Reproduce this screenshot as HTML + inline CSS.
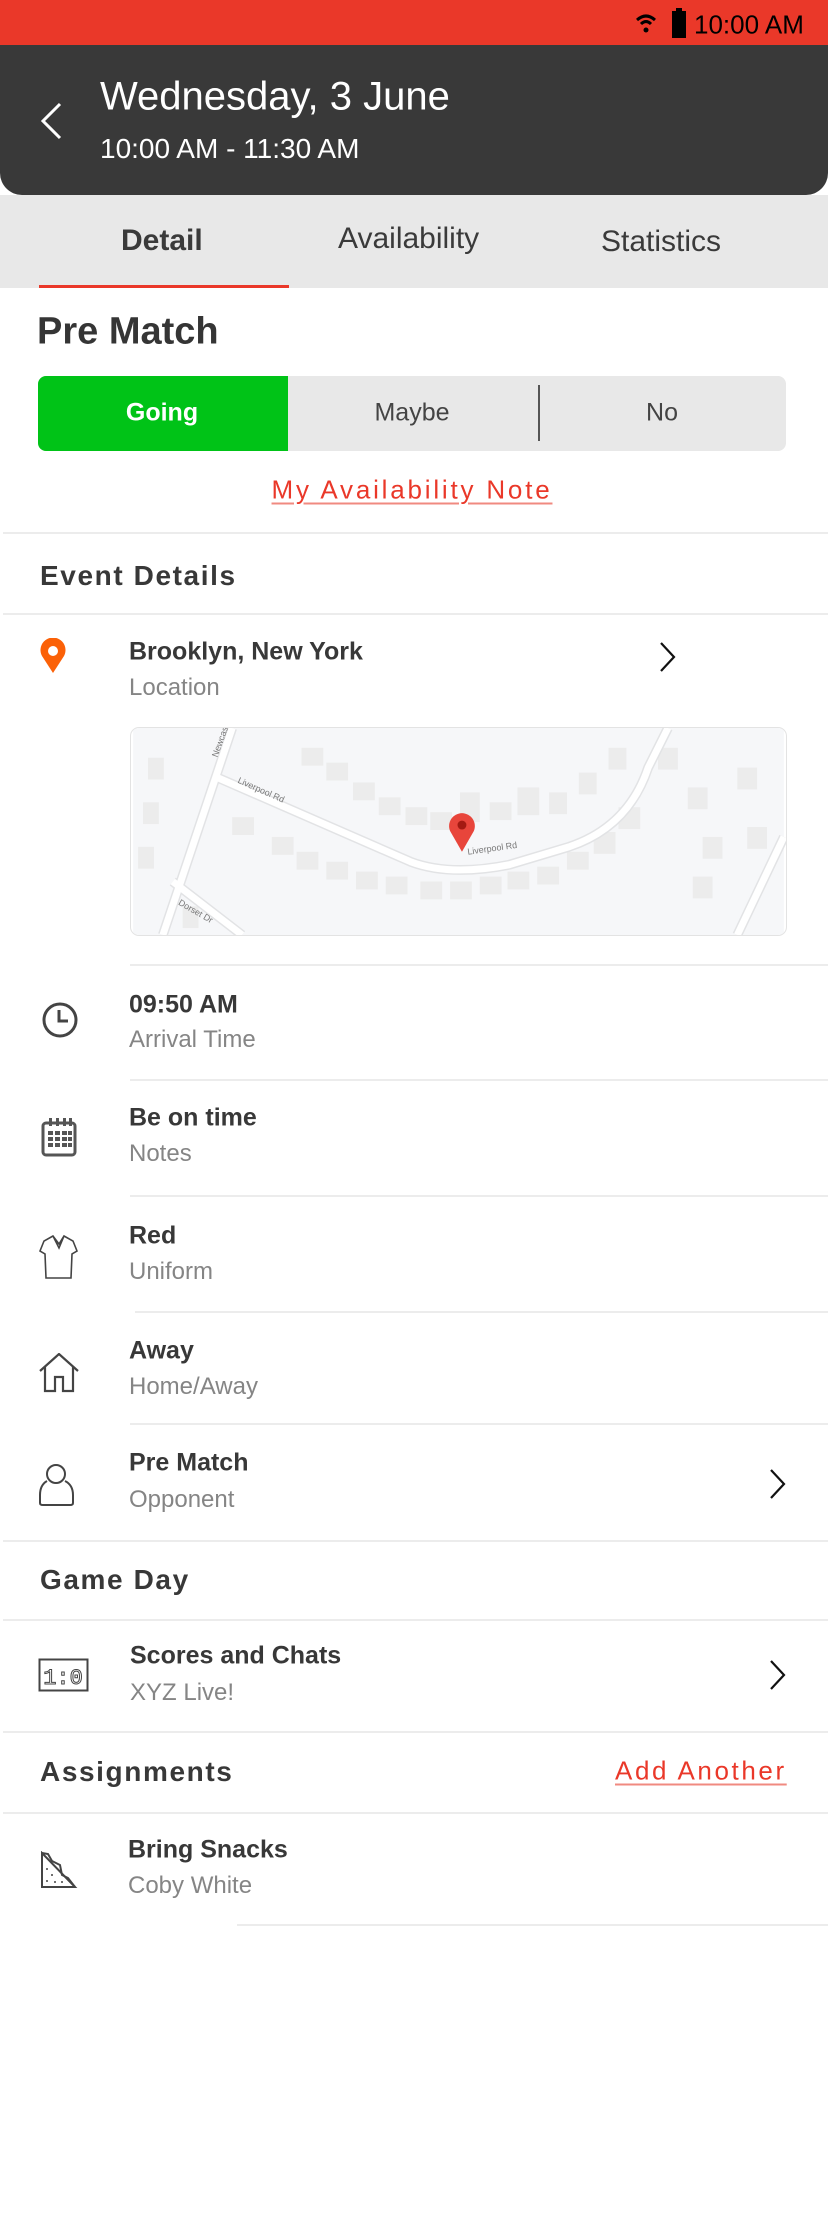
<!DOCTYPE html>
<html><head><meta charset="utf-8"><style>
*{margin:0;padding:0;box-sizing:border-box}
body{width:828px;height:2236px;background:#fff;font-family:"Liberation Sans",sans-serif;color:#333;position:relative;overflow:hidden}
.a{position:absolute}
.status{left:0;top:0;width:828px;height:45px;background:#ea3829}
.hdr{left:0;top:45px;width:828px;height:150px;background:#393939;border-radius:0 0 22px 22px}
.tabs{left:0;top:195px;width:828px;height:93px;background:#e8e8e8}
.t{transform:translateY(-50%);white-space:nowrap}
.div{height:2px;background:#ececec}
.b{font-weight:bold;font-size:25px;color:#383838}
.s{font-size:24px;color:#858585}
.sec{font-weight:bold;font-size:28px;letter-spacing:1.6px;color:#383838}
</style></head><body>
<div class="a status"></div>
<svg class="a" style="left:636px;top:12px" width="20" height="22" viewBox="0 0 20 22"><path d="M1 8 Q10 0 19 8" stroke="#000" stroke-width="3" fill="none"/><path d="M5 12 Q10 7 15 12" stroke="#000" stroke-width="3" fill="none"/><circle cx="10" cy="18" r="2.5" fill="#000"/></svg>
<div class="a" style="left:672px;top:11px;width:14px;height:27px;background:#000"></div>
<div class="a" style="left:676px;top:8px;width:6px;height:4px;background:#000"></div>
<div class="a t" style="left:694px;top:25px;font-size:26px;color:#000">10:00 AM</div>
<div class="a hdr"></div>
<svg class="a" style="left:38px;top:102px" width="26" height="38" viewBox="0 0 26 38"><path d="M22 2 L5 19 L22 36" stroke="#fff" stroke-width="3" fill="none"/></svg>
<div class="a t" style="left:100px;top:97px;font-size:40px;color:#fff">Wednesday, 3 June</div>
<div class="a t" style="left:100px;top:149px;font-size:28px;color:#fff">10:00 AM - 11:30 AM</div>
<div class="a tabs"></div>
<div class="a t" style="left:121px;top:241px;font-size:30px;font-weight:bold;color:#3a3a3a">Detail</div>
<div class="a t" style="left:338px;top:239px;font-size:30px;color:#3a3a3a">Availability</div>
<div class="a t" style="left:601px;top:242px;font-size:30px;color:#3a3a3a">Statistics</div>
<div class="a" style="left:39px;top:285px;width:250px;height:3px;background:#ea3829"></div>
<div class="a t" style="left:37px;top:332px;font-size:38px;font-weight:bold;color:#353535">Pre Match</div>
<div class="a" style="left:38px;top:376px;width:748px;height:75px;background:#e8e8e8;border-radius:8px;overflow:hidden"><div style="width:250px;height:75px;background:#00c317"></div></div>
<div class="a" style="left:538px;top:385px;width:2px;height:56px;background:#555"></div>
<div class="a t" style="left:162px;top:413px;font-size:25px;font-weight:bold;color:#fff;transform:translate(-50%,-50%)">Going</div>
<div class="a t" style="left:412px;top:413px;font-size:25px;color:#444;transform:translate(-50%,-50%)">Maybe</div>
<div class="a t" style="left:662px;top:413px;font-size:25px;color:#444;transform:translate(-50%,-50%)">No</div>
<div class="a t" style="left:412px;top:490px;font-size:26px;color:#ea3829;letter-spacing:2.8px;transform:translate(-50%,-50%);text-decoration:underline;text-decoration-color:#f08a80;text-underline-offset:4px">My Availability Note</div>
<div class="a div" style="left:3px;top:532px;width:825px"></div>
<div class="a t sec" style="left:40px;top:576px">Event Details</div>
<div class="a div" style="left:3px;top:613px;width:825px"></div>
<svg class="a" style="left:39px;top:638px" width="28" height="36" viewBox="0 0 28 36"><path d="M14 35 L3 18 A12.5 12.5 0 1 1 25 18 Z" fill="#fb6107"/><circle cx="14" cy="13" r="5" fill="#fff"/></svg>
<div class="a t b" style="left:129px;top:652px">Brooklyn, New York</div>
<div class="a t s" style="left:129px;top:688px">Location</div>
<svg class="a" style="left:658px;top:641px" width="20" height="32" viewBox="0 0 20 32"><path d="M3 2 L16 16 L3 30" stroke="#111" stroke-width="2.2" fill="none"/></svg>
<svg class="a" style="left:130px;top:727px;border:1px solid #e3e3e3;border-radius:9px" width="657" height="209" viewBox="0 0 657 209">
<rect width="657" height="209" fill="#f6f7f9"/>
<g fill="#ececec">
<rect x="170" y="20" width="22" height="18"/><rect x="195" y="35" width="22" height="18"/><rect x="222" y="55" width="22" height="18"/><rect x="248" y="70" width="22" height="18"/><rect x="275" y="80" width="22" height="18"/><rect x="300" y="85" width="22" height="18"/><rect x="330" y="65" width="20" height="30"/><rect x="360" y="75" width="22" height="18"/><rect x="388" y="60" width="22" height="28"/><rect x="420" y="65" width="18" height="22"/><rect x="450" y="45" width="18" height="22"/><rect x="480" y="20" width="18" height="22"/>
<rect x="100" y="90" width="22" height="18"/><rect x="140" y="110" width="22" height="18"/><rect x="165" y="125" width="22" height="18"/><rect x="195" y="135" width="22" height="18"/><rect x="225" y="145" width="22" height="18"/><rect x="255" y="150" width="22" height="18"/><rect x="290" y="155" width="22" height="18"/><rect x="320" y="155" width="22" height="18"/><rect x="350" y="150" width="22" height="18"/><rect x="378" y="145" width="22" height="18"/><rect x="408" y="140" width="22" height="18"/><rect x="438" y="125" width="22" height="18"/><rect x="465" y="105" width="22" height="22"/><rect x="490" y="80" width="22" height="22"/>
<rect x="530" y="20" width="20" height="22"/><rect x="560" y="60" width="20" height="22"/><rect x="575" y="110" width="20" height="22"/><rect x="565" y="150" width="20" height="22"/><rect x="610" y="40" width="20" height="22"/><rect x="620" y="100" width="20" height="22"/>
<rect x="15" y="30" width="16" height="22"/><rect x="10" y="75" width="16" height="22"/><rect x="5" y="120" width="16" height="22"/><rect x="50" y="180" width="16" height="22"/>
</g>
<g stroke="#e2e3e5" stroke-width="10" fill="none">
<path d="M100 0 L30 209"/><path d="M85 50 L280 135 Q320 150 380 138 L440 120 Q500 100 520 40 L540 0"/><path d="M40 155 L110 209"/><path d="M657 110 L610 209"/></g>
<g stroke="#fff" stroke-width="7" fill="none">
<path d="M100 0 L30 209"/><path d="M85 50 L280 135 Q320 150 380 138 L440 120 Q500 100 520 40 L540 0"/><path d="M40 155 L110 209"/><path d="M657 110 L610 209"/></g>
<g font-size="9" fill="#777" font-family="Liberation Sans"><text x="105" y="55" transform="rotate(24 105 55)">Liverpool Rd</text><text x="338" y="128" transform="rotate(-8 338 128)">Liverpool Rd</text><text x="45" y="178" transform="rotate(30 45 178)">Dorset Dr</text><text x="85" y="30" transform="rotate(-70 85 30)">Newcas</text></g>
<path d="M332 125 L320 104 A13 13 0 1 1 344 104 Z" fill="#e8453b"/><circle cx="332" cy="98" r="4.5" fill="#a31a12"/>
</svg>
<div class="a div" style="left:130px;top:964px;width:698px"></div>
<svg class="a" style="left:41px;top:1001px" width="38" height="38" viewBox="0 0 38 38"><circle cx="19" cy="19" r="16" stroke="#444" stroke-width="3" fill="none"/><path d="M18 9 V20 H27" stroke="#444" stroke-width="3" fill="none"/></svg>
<div class="a t b" style="left:129px;top:1005px">09:50 AM</div>
<div class="a t s" style="left:129px;top:1040px">Arrival Time</div>
<div class="a div" style="left:130px;top:1079px;width:698px"></div>
<svg class="a" style="left:41px;top:1117px" width="36" height="40" viewBox="0 0 36 40"><rect x="2" y="6" width="32" height="32" rx="3" stroke="#555" stroke-width="3" fill="none"/><g fill="#555"><rect x="8" y="1" width="3" height="8"/><rect x="15" y="1" width="3" height="8"/><rect x="22" y="1" width="3" height="8"/><rect x="28" y="1" width="3" height="8"/></g><g fill="#555"><rect x="7" y="14" width="5" height="4"/><rect x="14" y="14" width="5" height="4"/><rect x="21" y="14" width="5" height="4"/><rect x="27" y="14" width="4" height="4"/><rect x="7" y="20" width="5" height="4"/><rect x="14" y="20" width="5" height="4"/><rect x="21" y="20" width="5" height="4"/><rect x="27" y="20" width="4" height="4"/><rect x="7" y="26" width="5" height="4"/><rect x="14" y="26" width="5" height="4"/><rect x="21" y="26" width="5" height="4"/><rect x="27" y="26" width="4" height="4"/></g></svg>
<div class="a t b" style="left:129px;top:1118px">Be on time</div>
<div class="a t s" style="left:129px;top:1154px">Notes</div>
<div class="a div" style="left:130px;top:1195px;width:698px"></div>
<svg class="a" style="left:38px;top:1234px" width="42" height="46" viewBox="0 0 42 46"><path d="M15 2 L6 7 L2 17 L7 20 L8 44 L33 44 L34 20 L39 17 L35 7 L26 2 L21 10 Z M15 2 L21 14 L26 2" stroke="#444" stroke-width="1.6" fill="none"/></svg>
<div class="a t b" style="left:129px;top:1236px">Red</div>
<div class="a t s" style="left:129px;top:1272px">Uniform</div>
<div class="a div" style="left:135px;top:1311px;width:693px"></div>
<svg class="a" style="left:38px;top:1353px" width="44" height="40" viewBox="0 0 44 40"><path d="M2 18 L21 1 L40 18 M7 14 V38 H17 V24 H25 V38 H35 V14" stroke="#444" stroke-width="2.2" fill="none"/></svg>
<div class="a t b" style="left:129px;top:1351px">Away</div>
<div class="a t s" style="left:129px;top:1387px">Home/Away</div>
<div class="a div" style="left:130px;top:1423px;width:698px"></div>
<svg class="a" style="left:38px;top:1463px" width="40" height="44" viewBox="0 0 40 44"><circle cx="18" cy="11" r="9" stroke="#444" stroke-width="2" fill="none"/><path d="M9 18 Q2 22 2 32 V40 Q2 42 5 42 H32 Q35 42 35 40 V32 Q35 22 27 18" stroke="#444" stroke-width="2" fill="none"/></svg>
<div class="a t b" style="left:129px;top:1463px">Pre Match</div>
<div class="a t s" style="left:129px;top:1500px">Opponent</div>
<svg class="a" style="left:768px;top:1468px" width="20" height="32" viewBox="0 0 20 32"><path d="M3 2 L16 16 L3 30" stroke="#111" stroke-width="2.2" fill="none"/></svg>
<div class="a div" style="left:3px;top:1540px;width:825px"></div>
<div class="a t sec" style="left:40px;top:1580px">Game Day</div>
<div class="a div" style="left:3px;top:1619px;width:825px"></div>
<svg class="a" style="left:38px;top:1658px" width="52" height="34" viewBox="0 0 52 34"><rect x="1.5" y="1.5" width="48" height="31" stroke="#444" stroke-width="2" fill="none"/><text x="25" y="26" font-size="22" font-family="Liberation Mono" fill="none" stroke="#444" stroke-width="1" text-anchor="middle">1:0</text></svg>
<div class="a t b" style="left:130px;top:1656px">Scores and Chats</div>
<div class="a t s" style="left:130px;top:1693px">XYZ Live!</div>
<svg class="a" style="left:768px;top:1659px" width="20" height="32" viewBox="0 0 20 32"><path d="M3 2 L16 16 L3 30" stroke="#111" stroke-width="2.2" fill="none"/></svg>
<div class="a div" style="left:3px;top:1731px;width:825px"></div>
<div class="a t sec" style="left:40px;top:1772px">Assignments</div>
<div class="a t" style="left:615px;top:1771px;font-size:26px;color:#ea3829;letter-spacing:2.6px;text-decoration:underline;text-decoration-color:#f08a80;text-underline-offset:4px">Add Another</div>
<div class="a div" style="left:3px;top:1812px;width:825px"></div>
<svg class="a" style="left:40px;top:1851px" width="38" height="38" viewBox="0 0 38 38"><path d="M2 2 V36 H35 Z" stroke="#444" stroke-width="2" fill="none"/><path d="M2 2 L8 3 L12 10 L20 14 L22 24 L28 27 L35 36" stroke="#444" stroke-width="2" fill="none"/><g fill="#444"><circle cx="7" cy="18" r="1"/><circle cx="7" cy="30" r="1"/><circle cx="12" cy="24" r="1"/><circle cx="15" cy="31" r="1"/><circle cx="22" cy="31" r="1"/></g></svg>
<div class="a t b" style="left:128px;top:1850px">Bring Snacks</div>
<div class="a t s" style="left:128px;top:1886px">Coby White</div>
<div class="a div" style="left:237px;top:1924px;width:591px"></div>
</body></html>
